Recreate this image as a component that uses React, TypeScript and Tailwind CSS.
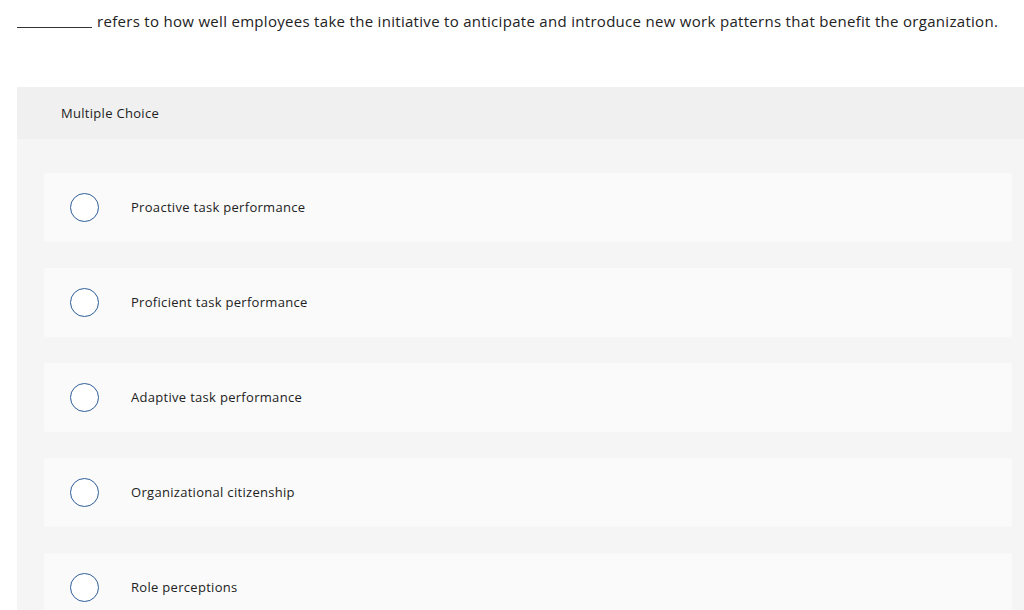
import React from 'react';

const options = [
  'Proactive task performance',
  'Proficient task performance',
  'Adaptive task performance',
  'Organizational citizenship',
  'Role perceptions',
];

export default function App() {
  return (
    <div className="w-[1024px] h-[610px] overflow-hidden bg-white text-[#222] tracking-[0.3px] font-['Open_Sans',Arial,sans-serif]">
      {/* Question prompt */}
      <div className="flex items-end pl-[17px] pt-[8px] h-[31px]">
        <span className="inline-block w-[75px] border-b border-[#333] mb-[3px]" />
        <p className="ml-[5px] text-[15px] leading-[20px]">
          refers to how well employees take the initiative to anticipate and introduce new work patterns that benefit the organization.
        </p>
      </div>

      {/* Answer panel */}
      <div className="ml-[17px] mt-[56px] bg-[#f5f5f5]">
        <div className="h-[52px] bg-[#f0f0f0] flex items-center pl-[44px] text-[13px] pt-[1px]">
          Multiple Choice
        </div>
        <div className="flex flex-col gap-[26px] pt-[34px] pl-[27px] pr-[12px]">
          {options.map((opt) => (
            <label
              key={opt}
              className="h-[69px] bg-[#fafafa] rounded-[3px] flex items-center cursor-pointer"
            >
              <span className="ml-[26px] w-[29px] h-[29px] rounded-full border border-[#2d5d98] bg-white shrink-0" />
              <span className="ml-[32px] text-[13px]">{opt}</span>
            </label>
          ))}
        </div>
      </div>
    </div>
  );
}
